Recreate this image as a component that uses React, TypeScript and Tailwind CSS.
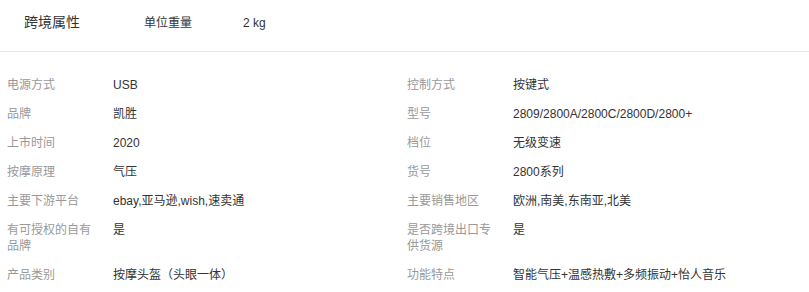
const LEFT = [
  ['电源方式', 'USB'],
  ['品牌', '凯胜'],
  ['上市时间', '2020'],
  ['按摩原理', '气压'],
  ['主要下游平台', 'ebay,亚马逊,wish,速卖通'],
  ['有可授权的自有品牌', '是'],
  ['产品类别', '按摩头盔（头眼一体）'],
]

const RIGHT = [
  ['控制方式', '按键式'],
  ['型号', '2809/2800A/2800C/2800D/2800+'],
  ['档位', '无级变速'],
  ['货号', '2800系列'],
  ['主要销售地区', '欧洲,南美,东南亚,北美'],
  ['是否跨境出口专供货源', '是'],
  ['功能特点', '智能气压+温感热敷+多频振动+怡人音乐'],
]

export default function App() {
  return (
    <div
      className="w-[809px] h-[292px] bg-white overflow-hidden text-[#333]"
      style={{ fontFamily: "'Liberation Sans', 'Noto Sans CJK SC', sans-serif" }}
    >
      {/* 跨境属性 */}
      <div className="flex items-center h-[52px] border-b border-[#e8e8e8] pb-[6px]">
        <span className="w-[144px] pl-[24px] text-[14px]">跨境属性</span>
        <span className="w-[99px] text-[12px]">单位重量</span>
        <span className="text-[12px]">2 kg</span>
      </div>

      {/* 属性表 */}
      <div className="flex pt-[18px]">
        {[LEFT, RIGHT].map((col, i) => (
          <div key={i} className="w-[400px] flex flex-col">
            {col.map(([label, value]) => (
              <div key={label} className="flex py-[6.5px] text-[12px] leading-4">
                <div className="w-[113px] shrink-0 pl-[7px] pr-[18px] text-[#999]">{label}</div>
                <div className="flex-1">{value}</div>
              </div>
            ))}
          </div>
        ))}
      </div>
    </div>
  )
}
